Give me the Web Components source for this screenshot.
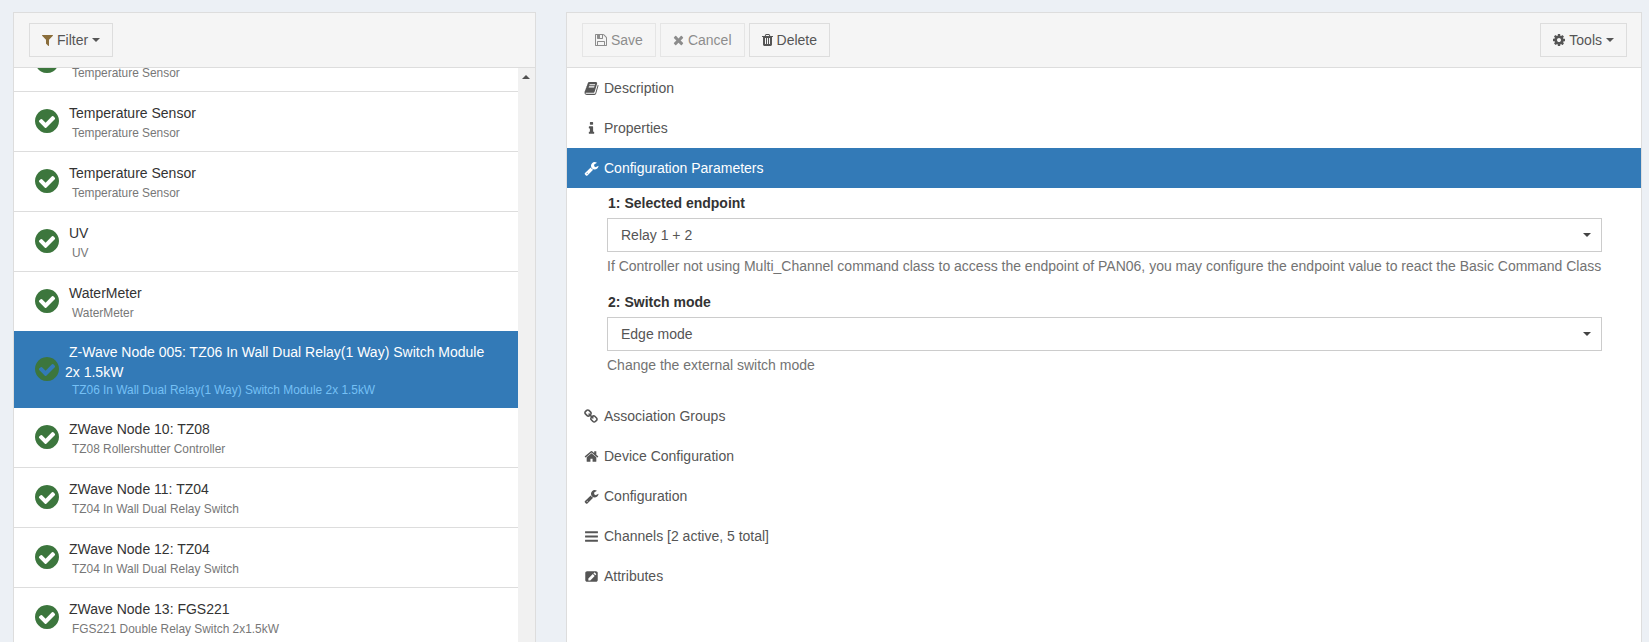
<!DOCTYPE html>
<html><head><meta charset="utf-8">
<style>
html,body{margin:0;height:642px;overflow:hidden;background:#ecf0f5}
body{font:14px/20px "Liberation Sans",Arial,sans-serif;color:#333}
</style></head>
<body>
<x-app>
  <x-panel slot="left">
    <x-btn slot="head" icon="filter" iconcolor="#8a6d3b" caret>Filter</x-btn>
    <x-list>
      <x-row first title="Temperature Sensor" sub="Temperature Sensor"></x-row>
      <x-row title="Temperature Sensor" sub="Temperature Sensor"></x-row>
      <x-row title="Temperature Sensor" sub="Temperature Sensor"></x-row>
      <x-row title="UV" sub="UV"></x-row>
      <x-row title="WaterMeter" sub="WaterMeter"></x-row>
      <x-row active title="Z-Wave Node 005: TZ06 In Wall Dual Relay(1 Way) Switch Module 2x 1.5kW" sub="TZ06 In Wall Dual Relay(1 Way) Switch Module 2x 1.5kW"></x-row>
      <x-row title="ZWave Node 10: TZ08" sub="TZ08 Rollershutter Controller"></x-row>
      <x-row title="ZWave Node 11: TZ04" sub="TZ04 In Wall Dual Relay Switch"></x-row>
      <x-row title="ZWave Node 12: TZ04" sub="TZ04 In Wall Dual Relay Switch"></x-row>
      <x-row title="ZWave Node 13: FGS221" sub="FGS221 Double Relay Switch 2x1.5kW"></x-row>
    </x-list>
  </x-panel>
  <x-panel slot="right" wide>
    <x-btn slot="head" icon="save" disabled>Save</x-btn>
    <x-btn slot="head" icon="times" disabled>Cancel</x-btn>
    <x-btn slot="head" icon="trash">Delete</x-btn>
    <x-btn slot="tools" icon="cog" caret>Tools</x-btn>
    <x-acc icon="book">Description</x-acc>
    <x-acc icon="info">Properties</x-acc>
    <x-acc icon="wrench" active>Configuration Parameters</x-acc>
    <x-params>
      <x-param num="1" label="Selected endpoint" value="Relay 1 + 2">If Controller not using Multi_Channel command class to access the endpoint of PAN06, you may configure the endpoint value to react the Basic Command Class</x-param>
      <x-param num="2" label="Switch mode" value="Edge mode">Change the external switch mode</x-param>
    </x-params>
    <x-acc icon="link">Association Groups</x-acc>
    <x-acc icon="home">Device Configuration</x-acc>
    <x-acc icon="wrench">Configuration</x-acc>
    <x-acc icon="bars">Channels [2 active, 5 total]</x-acc>
    <x-acc icon="pencil">Attributes</x-acc>
  </x-panel>
</x-app>
<script>
const ICONS={
filter:'<path d="M1595 295q17 41-14 70l-493 493v742q0 42-39 59-13 5-25 5-27 0-45-19l-256-256q-19-19-19-45v-486l-493-493q-31-29-14-70 17-39 59-39h1280q42 0 59 39z"/>',
save:'<path d="M512 1536h768v-384h-768v384zm896 0h128v-896q0-14-10-38.500t-20-34.500l-281-281q-10-10-34-20t-39-10v416q0 40-28 68t-68 28h-576q-40 0-68-28t-28-68v-416h-128v1280h128v-416q0-40 28-68t68-28h832q40 0 68 28t28 68v416zm-384-928v-320q0-13-9.500-22.500t-22.500-9.500h-192q-13 0-22.500 9.500t-9.500 22.500v320q0 13 9.500 22.500t22.500 9.500h192q13 0 22.500-9.500t9.500-22.500zm640 32v928q0 40-28 68t-68 28h-1344q-40 0-68-28t-28-68v-1344q0-40 28-68t68-28h928q40 0 88 20t76 48l280 280q28 28 48 76t20 88z"/>',
times:'<path d="M1490 1322q0 40-28 68l-136 136q-28 28-68 28t-68-28l-294-294-294 294q-28 28-68 28t-68-28l-136-136q-28-28-28-68t28-68l294-294-294-294q-28-28-28-68t28-68l136-136q28-28 68-28t68 28l294 294 294-294q28-28 68-28t68 28l136 136q28 28 28 68t-28 68l-294 294 294 294q28 28 28 68z"/>',
trash:'<path d="M704 1376v-704q0-14-9-23t-23-9h-64q-14 0-23 9t-9 23v704q0 14 9 23t23 9h64q14 0 23-9t9-23zm256 0v-704q0-14-9-23t-23-9h-64q-14 0-23 9t-9 23v704q0 14 9 23t23 9h64q14 0 23-9t9-23zm256 0v-704q0-14-9-23t-23-9h-64q-14 0-23 9t-9 23v704q0 14 9 23t23 9h64q14 0 23-9t9-23zm-544-992h448l-48-117q-7-9-17-11h-317q-10 2-17 11zm928 32v64q0 14-9 23t-23 9h-96v948q0 83-47 143.500t-113 60.500h-832q-66 0-113-58.500t-47-141.500v-952h-96q-14 0-23-9t-9-23v-64q0-14 9-23t23-9h309l70-167q15-37 54-63t79-26h320q40 0 79 26t54 63l70 167h309q14 0 23 9t9 23z"/>',
cog:'<path d="M1152 896q0-106-75-181t-181-75-181 75-75 181 75 181 181 75 181-75 75-181zm512-109v222q0 12-8 23t-20 13l-185 28q-19 54-39 91 35 50 107 138 10 12 10 25t-9 23q-27 37-99 108t-94 71q-12 0-26-9l-138-108q-44 23-91 38-16 136-29 186-7 28-36 28h-222q-14 0-24.500-8.500t-11.500-21.500l-28-184q-49-16-90-37l-141 107q-10 9-25 9-14 0-25-11-126-114-165-168-7-10-7-23 0-12 8-23 15-21 51-66.500t54-70.500q-27-50-41-99l-183-27q-13-2-21-12.500t-8-23.500v-222q0-12 8-23t19-13l186-28q14-46 39-92-40-57-107-138-10-12-10-24 0-10 9-23 26-36 98.500-107.500t94.500-71.500q13 0 26 10l138 107q44-23 91-38 16-136 29-186 7-28 36-28h222q14 0 24.500 8.500t11.500 21.500l28 184q49 16 90 37l142-107q9-9 24-9 13 0 25 10 129 119 165 170 7 8 7 22 0 12-8 23-15 21-51 66.500t-54 70.500q26 50 41 98l183 28q13 2 21 12.500t8 23.500z"/>',
book:'<path d="M1703 478q40 57 18 129l-275 906q-19 64-76.500 107.500t-122.500 43.500h-923q-77 0-148.500-53.500t-99.500-131.500q-24-67-2-127 0-4 3-27t4-37q1-8-3-21.500t-3-19.500q2-11 8-21t16.500-23.500 16.500-23.500q23-38 45-91.500t30-91.500q3-10 .5-30t-.5-28q3-11 17-28t17-23q21-36 42-92t25-90q1-9-2.500-32t.5-28q4-13 22-30.500t22-22.500q19-26 42.500-84.500t27.500-96.500q1-8-3-25.500t-2-26.500q2-8 9-18t18-23 17-21q8-12 16.500-30.500t15-35 16-36 19.500-32 26.500-23.500 36-11.500 47.500 5.500l-1 3q38-9 51-9h761q74 0 114 56t18 130l-274 906q-36 119-71.500 153.500t-128.500 34.500h-869q-27 0-38 15-11 16-1 43 24 70 144 70h923q29 0 56-15.500t35-41.500l300-987q7-22 5-57 38 15 59 43zm-1064 2q-4 13 2 22.500t20 9.500h608q13 0 25.500-9.500t16.500-22.500l21-64q4-13-2-22.500t-20-9.500h-608q-13 0-25.500 9.500t-16.500 22.500zm-83 256q-4 13 2 22.500t20 9.500h608q13 0 25.500-9.500t16.500-22.500l21-64q4-13-2-22.500t-20-9.500h-608q-13 0-25.500 9.500t-16.500 22.500z"/>',
info:'<path d="M1216 1344v128q0 26-19 45t-45 19h-512q-26 0-45-19t-19-45v-128q0-26 19-45t45-19h64v-384h-64q-26 0-45-19t-19-45v-128q0-26 19-45t45-19h384q26 0 45 19t19 45v576h64q26 0 45 19t19 45zm-128-1152v192q0 26-19 45t-45 19h-256q-26 0-45-19t-19-45v-192q0-26 19-45t45-19h256q26 0 45 19t19 45z"/>',
wrench:'<path d="M448 1472q0-26-19-45t-45-19-45 19-19 45 19 45 45 19 45-19 19-45zm644-420l-682 682q-37 37-90 37-52 0-91-37l-106-108q-38-36-38-90 0-53 38-91l681-681q39 98 114.500 173.500t173.500 114.500zm634-435q0 39-23 106-47 134-164.500 217.500t-258.500 83.500q-185 0-316.500-131.500t-131.500-316.500 131.500-316.500 316.500-131.500q58 0 121.500 16.500t107.500 46.500q16 11 16 28t-16 28l-293 169v224l193 107q5-3 79-48.500t135.500-81 70.500-35.500q15 0 23.500 10t8.500 25z"/>',
link:'<path d="M1456 1216q0-40-28-68l-208-208q-28-28-68-28-42 0-72 32 3 3 19 18.500t21.500 21.500 15 19 13 25.500 3.500 27.500q0 40-28 68t-68 28q-15 0-27.500-3.500t-25.500-13-19-15-21.500-21.500-18.500-19q-33 31-33 73 0 40 28 68l206 207q27 27 68 27 40 0 68-26l147-146q28-28 28-67zm-703-705q0-40-28-68l-206-207q-28-28-68-28-39 0-68 27l-147 146q-28 28-28 67 0 40 28 68l208 208q27 27 68 27 42 0 72-31-3-3-19-18.500t-21.500-21.500-15-19-13-25.500-3.500-27.500q0-40 28-68t68-28q15 0 27.500 3.500t25.500 13 19 15 21.500 21.500 18.500 19q33-31 33-73zm895 705q0 120-85 203l-147 146q-83 83-203 83-121 0-204-85l-206-207q-83-83-83-203 0-123 88-209l-88-88q-86 88-208 88-120 0-204-84l-208-208q-84-84-84-204t85-203l147-146q83-83 203-83 121 0 204 85l206 207q83 83 83 203 0 123-88 209l88 88q86-88 208-88 120 0 204 84l208 208q84 84 84 204z"/>',
home:'<path d="M1472 992v480q0 26-19 45t-45 19h-384v-384h-256v384h-384q-26 0-45-19t-19-45v-480q0-1 .5-3t.5-3l575-474 575 474q1 2 1 6zm223-69l-62 74q-8 9-21 11h-3q-13 0-21-7l-692-577-692 577q-12 8-24 7-13-2-21-11l-62-74q-8-10-7-23.500t11-21.500l719-599q32-26 76-26t76 26l244 204v-195q0-14 9-23t23-9h192q14 0 23 9t9 23v408l219 182q10 8 11 21.500t-7 23.500z"/>',
bars:'<path d="M1664 1344v128q0 26-19 45t-45 19h-1408q-26 0-45-19t-19-45v-128q0-26 19-45t45-19h1408q26 0 45 19t19 45zm0-512v128q0 26-19 45t-45 19h-1408q-26 0-45-19t-19-45v-128q0-26 19-45t45-19h1408q26 0 45 19t19 45zm0-512v128q0 26-19 45t-45 19h-1408q-26 0-45-19t-19-45v-128q0-26 19-45t45-19h1408q26 0 45 19t19 45z"/>',
pencil:'<path fill-rule="evenodd" d="M368 256h1056q90 0 153 63t63 153v848q0 90-63 153t-153 63H368q-90 0-153-63t-63-153V472q0-90 63-153t153-63zM1290 430q-28-28-66 0l-96 96 226 226 96-96q28-38 0-66zM1050 604 520 1134v226h226l530-530z"/>',
check:'<path d="M1412 734q0-28-18-46l-91-90q-19-19-45-19t-45 19l-408 407-226-226q-19-19-45-19t-45 19l-91 90q-18 18-18 46 0 27 18 45l362 362q19 19 45 19 27 0 46-19l543-543q18-18 18-45zm252 162q0 209-103 385.500t-279.500 279.500-385.500 103-385.500-103-279.500-279.500-103-385.500 103-385.500 279.500-279.500 385.500-103 385.500 103 279.500 279.500 103 385.500z"/>'
};
const ADV={filter:1408,save:1536,times:1408,trash:1408,cog:1536};
const svg=(n,s)=>`<svg width="${s}" height="${s}" viewBox="0 0 1792 1792" fill="currentColor">${ICONS[n]}</svg>`;
const svgAdv=(n,s)=>{const a=ADV[n];return `<svg width="${a*s/1792}" height="${s}" viewBox="${(1792-a)/2} 0 ${a} 1792" fill="currentColor">${ICONS[n]}</svg>`;};
class Base extends HTMLElement{
  constructor(){super();this.attachShadow({mode:'open'});}
}
customElements.define('x-app',class extends Base{
  connectedCallback(){this.shadowRoot.innerHTML=`<style>
  :host{display:grid;grid-template-columns:523px 1076px;column-gap:30px;padding:12px 0 0 13px;height:630px;overflow:hidden}
  </style><slot name="left"></slot><slot name="right"></slot>`;}
});
customElements.define('x-panel',class extends Base{
  connectedCallback(){this.shadowRoot.innerHTML=`<style>
  :host{display:flex;flex-direction:column;height:660px;background:#fff;border:1px solid #ddd;box-sizing:border-box;min-width:0}
  .head{display:flex;align-items:center;gap:4px;background:#f5f5f5;border-bottom:1px solid #ddd;height:55px;box-sizing:border-box;padding:0 15px;flex:none}
  :host([wide]) .head{padding:0 14px 0 15px}
  .sp{flex:1}
  .body{flex:1;min-height:0;overflow:hidden;display:block}
  </style><div class="head"><slot name="head"></slot><span class="sp"></span><slot name="tools"></slot></div><div class="body"><slot></slot></div>`;}
});
customElements.define('x-btn',class extends Base{
  connectedCallback(){
    const ic=this.getAttribute('iconcolor');
    this.shadowRoot.innerHTML=`<style>
    :host{display:inline-flex;align-items:center;box-sizing:border-box;height:34px;padding:0 12px;background:#f5f5f5;border:1px solid #ddd;color:#555;flex:none}
    :host([disabled]){opacity:.65}
    svg{display:block;flex:none;margin-right:4px;${ic?`color:${ic};`:''}}
    i{display:block;width:0;height:0;margin-left:4px;border-top:4px solid;border-left:4px solid transparent;border-right:4px solid transparent}
    </style>${svgAdv(this.getAttribute('icon'),14)}<slot></slot>${this.hasAttribute('caret')?'<i></i>':''}`;}
});
customElements.define('x-list',class extends Base{
  connectedCallback(){this.shadowRoot.innerHTML=`<style>
  :host{display:flex;height:100%;overflow:hidden}
  .items{flex:1;min-width:0;height:700px}
  .bar{flex:none;width:17px;background:#f1f1f1;position:relative}
  .bar i{display:block;position:absolute;left:4px;top:7px;width:0;height:0;border-bottom:4px solid #505050;border-left:4px solid transparent;border-right:4px solid transparent}
  </style><div class="items"><slot></slot></div><div class="bar"><i></i></div>`;}
});
customElements.define('x-row',class extends Base{
  connectedCallback(){
    const t=this.getAttribute('title'),s=this.getAttribute('sub');
    this.removeAttribute('title');
    this.shadowRoot.innerHTML=`<style>
    :host{display:flex;align-items:center;box-sizing:border-box;height:60px;padding:0 18px 0 21px;background:#fff;border-bottom:1px solid #ddd;color:#333}
    :host([first]){margin-top:-36px}
    :host([active]){height:77px;background:#337ab7;color:#fff;border-bottom:0;margin-top:-1px}
    svg{display:block;flex:none;color:#3c763d;margin-bottom:1px}
    .t{flex:1;min-width:0;margin:11px 0 0 6px;align-self:flex-start}
    .title{text-indent:4px;line-height:20px}
    .sub{font-size:11.9px;line-height:17px;color:#777;padding-left:7px;margin-top:2px}
    :host([active]) .sub{color:#75c0f5;margin-top:0}
    </style><svg width="24" height="24" viewBox="128 128 1536 1536" fill="currentColor">${ICONS.check}</svg>
    <div class="t"><div class="title">${t}</div><div class="sub">${s}</div></div>`;}
});
customElements.define('x-acc',class extends Base{
  connectedCallback(){this.shadowRoot.innerHTML=`<style>
  :host{display:flex;align-items:center;height:40px;padding-left:17px;color:#555}
  :host([active]){background:#337ab7;color:#fff}
  svg{display:block;flex:none;margin-right:5px}
  </style>${svg(this.getAttribute('icon'),15)}<slot></slot>`;}
});
customElements.define('x-params',class extends Base{
  connectedCallback(){this.shadowRoot.innerHTML=`<style>
  :host{display:block;padding:5px 39px 0 40px;height:208px;box-sizing:border-box}
  </style><slot></slot>`;}
});
customElements.define('x-param',class extends Base{
  connectedCallback(){
    this.shadowRoot.innerHTML=`<style>
    :host{display:block;margin-bottom:16px}
    .l{font-weight:bold;color:#333;line-height:20px;margin:0 0 5px 1px}
    .n{margin-right:4px}
    .s{display:flex;align-items:center;justify-content:space-between;box-sizing:border-box;height:34px;border:1px solid #ccc;padding:0 10px 0 13px;color:#555;background:#fff}
    .s i{display:block;width:0;height:0;border-top:4px solid #444;border-left:4px solid transparent;border-right:4px solid transparent}
    .h{color:#737373;margin-top:4px;white-space:nowrap;line-height:20px}
    </style><div class="l"><span class="n">${this.getAttribute('num')}:</span>${this.getAttribute('label')}</div>
    <div class="s"><span>${this.getAttribute('value')}</span><i></i></div>
    <div class="h"><slot></slot></div>`;}
});
</script>
</body></html>
